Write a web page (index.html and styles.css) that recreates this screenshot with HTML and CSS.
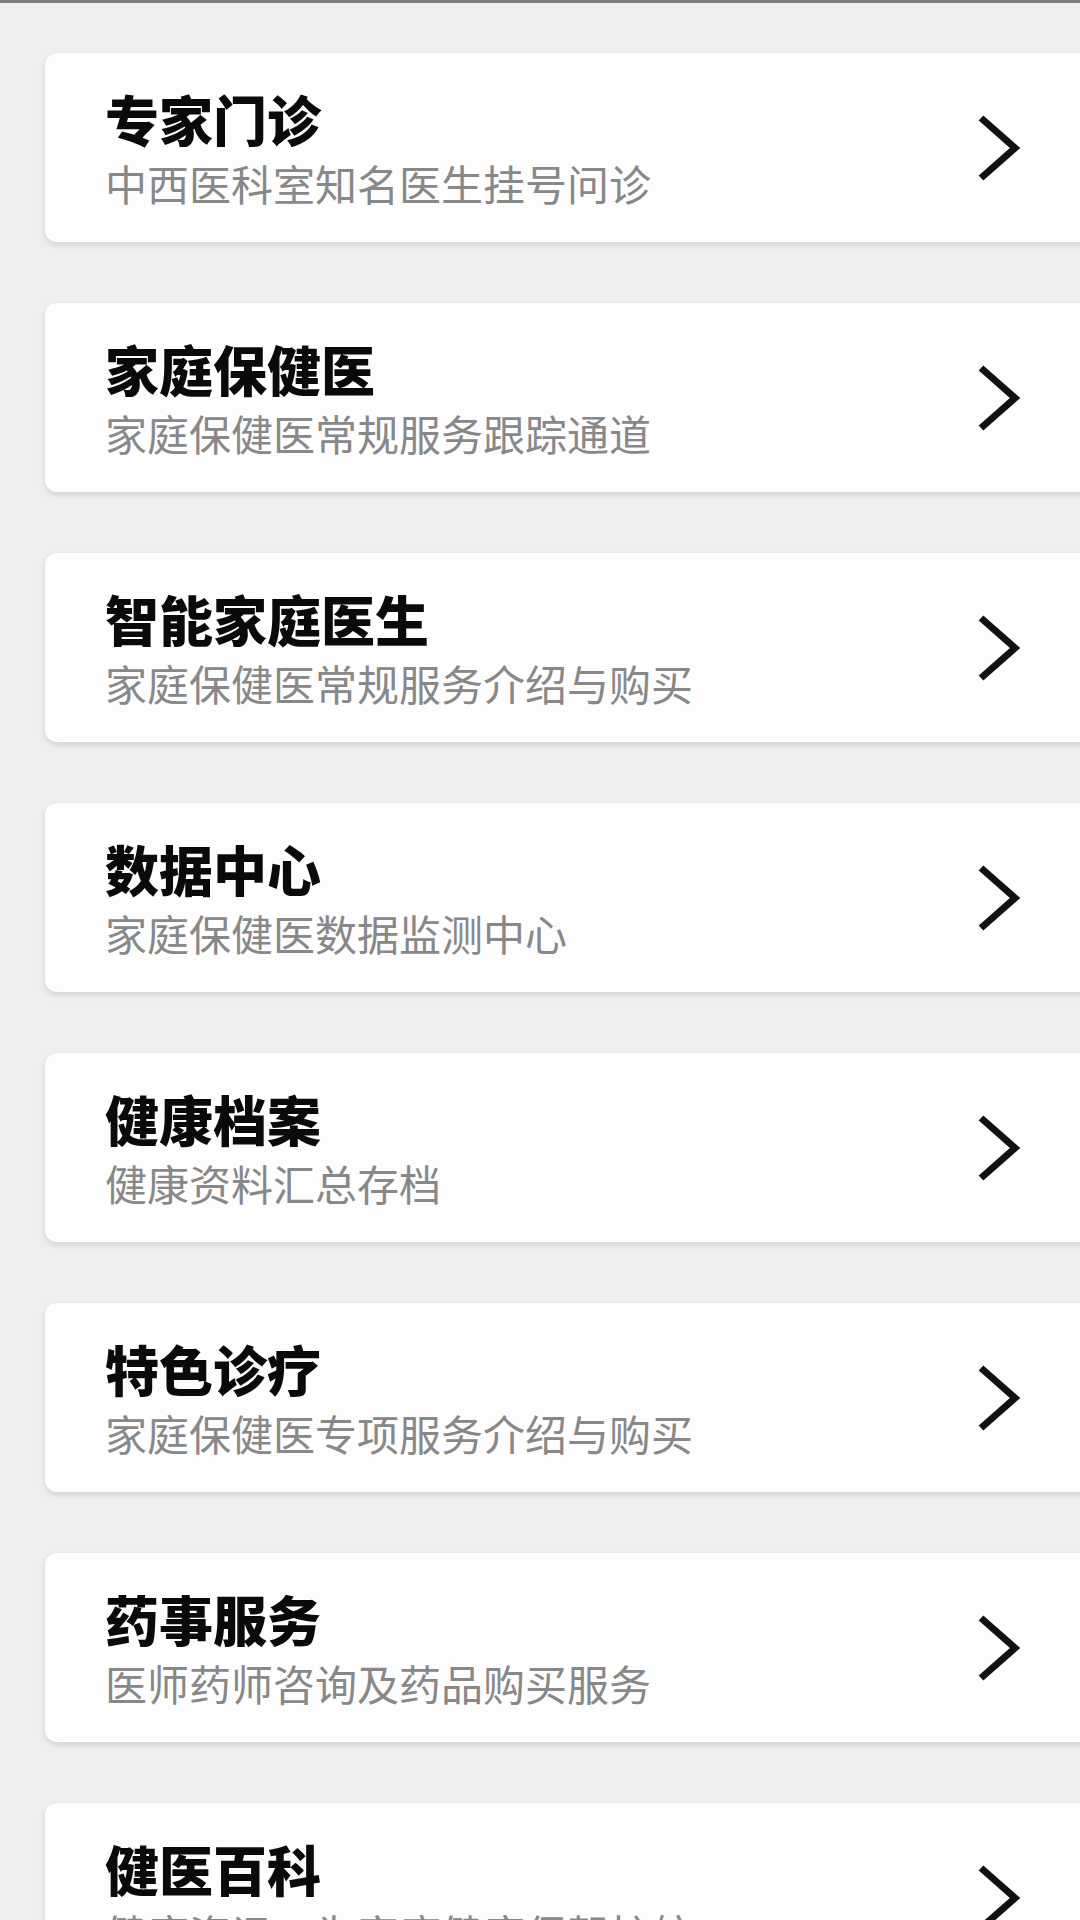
FILE: index.html
```html
<!DOCTYPE html>
<html lang="zh-CN">
<head>
  <meta charset="UTF-8">
  <meta name="viewport" content="width=device-width, initial-scale=1.0">
  <title>服务</title>
  <link rel="stylesheet" href="styles.css">
</head>
<body>

<div class="service-list">
  <a class="service-card" href="#">
    <div class="service-text">
      <div class="service-title">专家门诊</div>
      <div class="service-desc">中西医科室知名医生挂号问诊</div>
    </div>
    <svg class="chevron" viewBox="0 0 44 66"><polyline points="4,3 38,33 4,63"/></svg>
  </a>
  <a class="service-card" href="#">
    <div class="service-text">
      <div class="service-title">家庭保健医</div>
      <div class="service-desc">家庭保健医常规服务跟踪通道</div>
    </div>
    <svg class="chevron" viewBox="0 0 44 66"><polyline points="4,3 38,33 4,63"/></svg>
  </a>
  <a class="service-card" href="#">
    <div class="service-text">
      <div class="service-title">智能家庭医生</div>
      <div class="service-desc">家庭保健医常规服务介绍与购买</div>
    </div>
    <svg class="chevron" viewBox="0 0 44 66"><polyline points="4,3 38,33 4,63"/></svg>
  </a>
  <a class="service-card" href="#">
    <div class="service-text">
      <div class="service-title">数据中心</div>
      <div class="service-desc">家庭保健医数据监测中心</div>
    </div>
    <svg class="chevron" viewBox="0 0 44 66"><polyline points="4,3 38,33 4,63"/></svg>
  </a>
  <a class="service-card" href="#">
    <div class="service-text">
      <div class="service-title">健康档案</div>
      <div class="service-desc">健康资料汇总存档</div>
    </div>
    <svg class="chevron" viewBox="0 0 44 66"><polyline points="4,3 38,33 4,63"/></svg>
  </a>
  <a class="service-card" href="#">
    <div class="service-text">
      <div class="service-title">特色诊疗</div>
      <div class="service-desc">家庭保健医专项服务介绍与购买</div>
    </div>
    <svg class="chevron" viewBox="0 0 44 66"><polyline points="4,3 38,33 4,63"/></svg>
  </a>
  <a class="service-card" href="#">
    <div class="service-text">
      <div class="service-title">药事服务</div>
      <div class="service-desc">医师药师咨询及药品购买服务</div>
    </div>
    <svg class="chevron" viewBox="0 0 44 66"><polyline points="4,3 38,33 4,63"/></svg>
  </a>
  <a class="service-card" href="#">
    <div class="service-text">
      <div class="service-title">健医百科</div>
      <div class="service-desc">健康资讯，为家庭健康保驾护航</div>
    </div>
    <svg class="chevron" viewBox="0 0 44 66"><polyline points="4,3 38,33 4,63"/></svg>
  </a>
</div>

</body>
</html>
```

FILE: styles.css
```css
html, body {
  margin: 0;
  padding: 0;
}
body {
  font-family: "Noto Sans CJK SC", "Noto Sans", sans-serif;
  background-color: #efefef;
  border-top: 3px solid #7b7b7b;
  overflow: hidden;
  height: 1917px;
}
.service-list {
  display: flex;
  flex-direction: column;
  gap: 61px;
  padding: 50px 0 0 45px;
  margin-right: -30px;
}
.service-card {
  display: flex;
  align-items: center;
  justify-content: space-between;
  height: 189px;
  box-sizing: border-box;
  padding: 0 89px 0 60px;
  background: #fdfdfd;
  border-radius: 12px;
  box-shadow: 0 3px 6px rgba(0,0,0,0.12);
  text-decoration: none;
}
.service-title {
  font-size: 54px;
  line-height: 1;
  font-weight: 900;
  color: #0a0a0a;
}
.service-desc {
  margin-top: 16px;
  font-size: 42px;
  line-height: 1;
  color: #888888;
}
.chevron {
  width: 44px;
  height: 66px;
  flex-shrink: 0;
}
.chevron polyline {
  fill: none;
  stroke: #111;
  stroke-width: 7;
  stroke-linejoin: miter;
}
```
